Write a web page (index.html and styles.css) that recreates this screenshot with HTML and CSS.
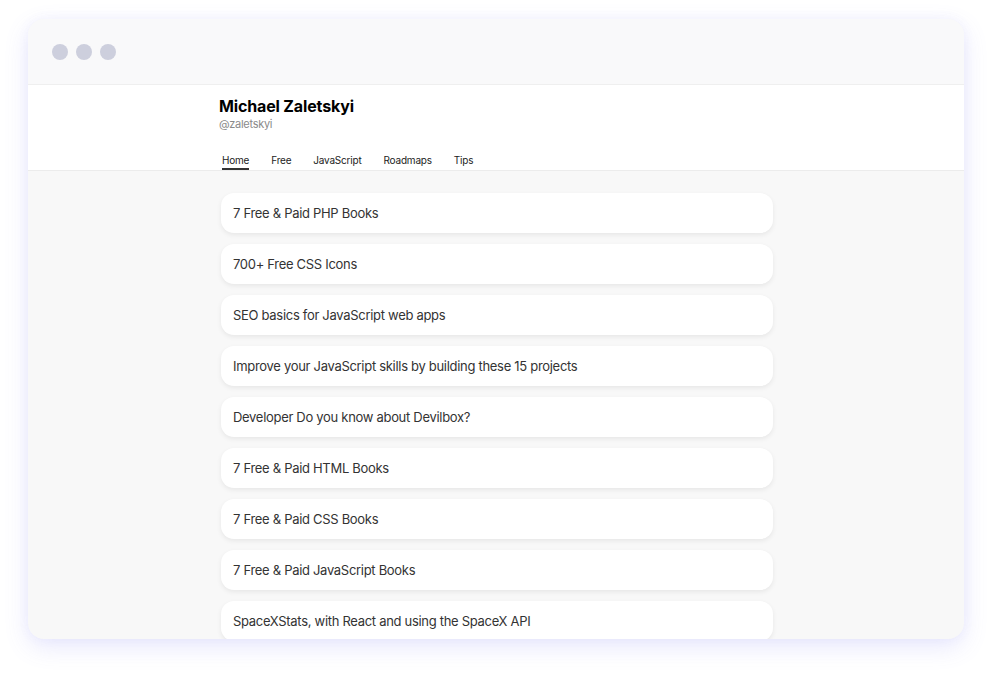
FILE: index.html
```html
<!DOCTYPE html>
<html lang="en">
<head>
<meta charset="utf-8">
<title>Michael Zaletskyi</title>
<link rel="stylesheet" href="styles.css">
</head>
<body>
<div class="stage">
  <div class="window">
    <div class="titlebar">
      <span class="dot"></span><span class="dot"></span><span class="dot"></span>
    </div>
    <header class="header">
      <div class="container">
        <h1 class="name">Michael Zaletskyi</h1>
        <div class="handle">@zaletskyi</div>
        <nav class="nav">
          <a class="nav-item active">Home</a>
          <a class="nav-item">Free</a>
          <a class="nav-item">JavaScript</a>
          <a class="nav-item">Roadmaps</a>
          <a class="nav-item">Tips</a>
        </nav>
      </div>
    </header>
    <main class="content">
      <div class="container list">
        <div class="card">7 Free &amp; Paid PHP Books</div>
        <div class="card">700+ Free CSS Icons</div>
        <div class="card">SEO basics for JavaScript web apps</div>
        <div class="card">Improve your JavaScript skills by building these 15 projects</div>
        <div class="card">Developer Do you know about Devilbox?</div>
        <div class="card">7 Free &amp; Paid HTML Books</div>
        <div class="card">7 Free &amp; Paid CSS Books</div>
        <div class="card">7 Free &amp; Paid JavaScript Books</div>
        <div class="card">SpaceXStats, with React and using the SpaceX API</div>
      </div>
    </main>
  </div>
</div>
</body>
</html>
```
FILE: styles.css
```css
* { box-sizing: border-box; }
html, body { margin: 0; padding: 0; background: #ffffff; }
body {
  font-family: Inter, "Noto Sans", "Liberation Sans", sans-serif;
  color: #333;
}
.stage {
  padding: 19px 28px 0 28px;
  height: 676px;
  overflow: hidden;
}
.window {
  width: 936px;
  height: 620px;
  border-radius: 16px;
  overflow: hidden;
  background: #f8f8f8;
  box-shadow: 0 8px 24px rgba(110, 110, 240, 0.16), 0 0 12px rgba(120, 120, 240, 0.06);
  display: flex;
  flex-direction: column;
}
.titlebar {
  height: 66px;
  flex: none;
  background: #f9f9fa;
  border-bottom: 1px solid #efefef;
  display: flex;
  align-items: center;
  gap: 8px;
  padding: 0 0 0 24px;
}
.dot {
  width: 16px;
  height: 16px;
  border-radius: 50%;
  background: #cdcfdd;
}
.header {
  background: #ffffff;
  border-bottom: 1px solid #ececec;
  flex: none;
}
.container {
  width: 554px;
  margin: 0 auto;
}
.name {
  margin: 0;
  padding-top: 11px;
  font-size: 16px;
  line-height: 21px;
  font-weight: 700;
  color: #000;
  letter-spacing: -0.15px;
}
.handle {
  font-size: 11px;
  line-height: 15px;
  color: #8a8a8a;
  letter-spacing: -0.3px;
}
.nav {
  display: flex;
  gap: 22px;
  margin-top: 22px;
  padding-left: 3px;
}
.nav-item {
  font-size: 10px;
  line-height: 12px;
  color: #222;
  letter-spacing: -0.2px;
  padding-bottom: 2px;
  border-bottom: 2px solid transparent;
}
.nav-item.active {
  border-bottom-color: #333;
}
.content {
  flex: 1;
  overflow: hidden;
  padding-top: 22px;
}
.list {
  display: flex;
  flex-direction: column;
  gap: 11px;
  padding-left: 2px;
}
.card {
  height: 40px;
  background: #ffffff;
  border-radius: 13px;
  box-shadow: 0 2px 5px rgba(0, 0, 0, 0.07);
  display: flex;
  align-items: center;
  padding: 0 12px;
  font-size: 13px;
  letter-spacing: -0.3px;
  color: #333;
  flex: none;
}
```
